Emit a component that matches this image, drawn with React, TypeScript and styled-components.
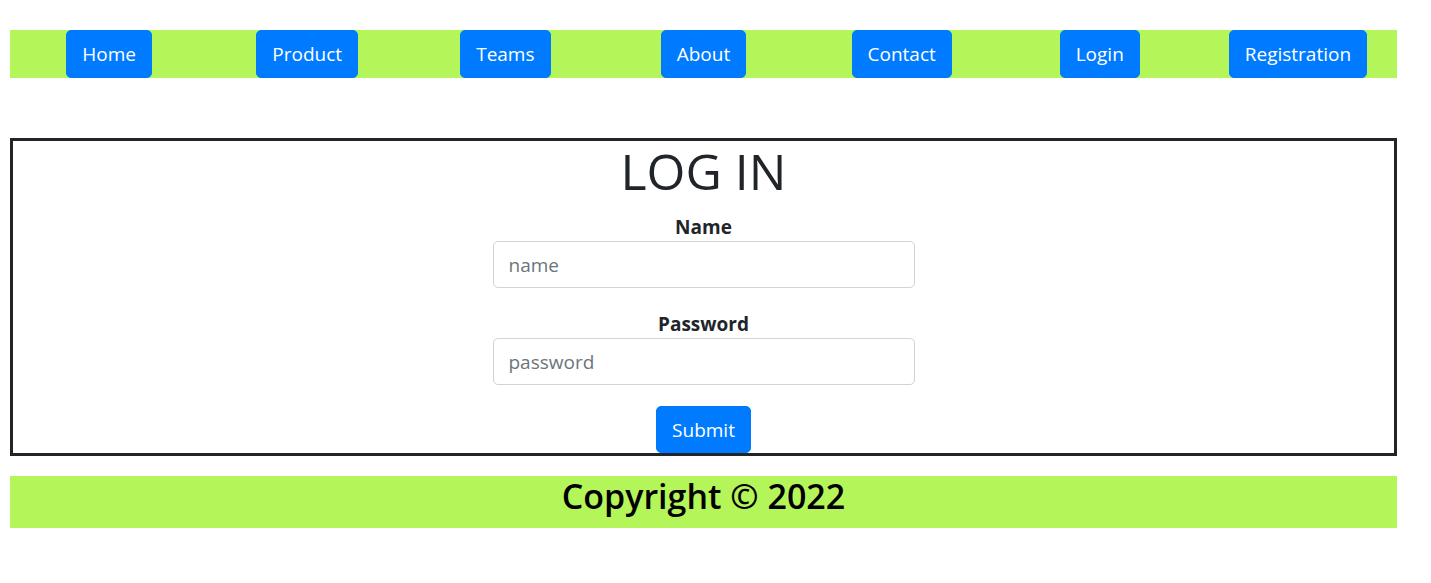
import React from "react";
import styled, { createGlobalStyle } from "styled-components";

const GlobalStyle = createGlobalStyle`
  html, body {
    margin: 0;
    padding: 0;
    background: #ffffff;
  }
  body {
    font-family: "Open Sans", "Noto Sans", Arial, sans-serif;
    color: #212529;
  }
  * { box-sizing: border-box; }
`;

const GREEN = "#b4f659";
const BLUE = "#007bff";

const Page = styled.div`
  width: 1387px;
  margin-left: 10px;
  padding-top: 30px;
`;

const Nav = styled.nav`
  display: grid;
  grid-template-columns: repeat(7, 1fr);
  justify-items: center;
  align-items: stretch;
  height: 48px;
  background: ${GREEN};
`;

const Button = styled.button<{ $h?: number }>`
  height: ${(p) => p.$h ?? 48}px;
  padding: 1px 15px 0;
  border: 1px solid ${BLUE};
  border-radius: 5px;
  background: ${BLUE};
  color: #ffffff;
  font-family: inherit;
  font-size: 19px;
  line-height: 1;
  cursor: pointer;
`;

const Card = styled.main`
  margin-top: 60px;
  border: 3px solid #212529;
  display: flex;
  flex-direction: column;
  align-items: center;
`;

const Title = styled.h1`
  margin: 0;
  font-size: 50px;
  line-height: 60px;
  font-weight: 400;
  color: #212529;
`;

const Label = styled.label<{ $top: number }>`
  display: block;
  margin-top: ${(p) => p.$top}px;
  font-size: 19px;
  line-height: 27px;
  font-weight: 700;
  color: #212529;
  text-align: center;
`;

const Input = styled.input`
  width: 422px;
  height: 47px;
  padding: 0 15px;
  border: 1px solid #ced4da;
  border-radius: 5px;
  font-family: inherit;
  font-size: 19px;
  color: #495057;
  background: #fff;
  &::placeholder {
    color: #6c757d;
  }
`;

const SubmitRow = styled.div`
  margin-top: 21px;
`;

const Footer = styled.footer`
  margin-top: 20px;
  height: 52px;
  padding-bottom: 11px;
  background: ${GREEN};
  text-align: center;
  font-size: 34px;
  line-height: 41px;
  font-weight: 600;
  color: #000;
`;

const links = ["Home", "Product", "Teams", "About", "Contact", "Login", "Registration"];

export default function App() {
  return (
    <>
      <GlobalStyle />
      <Page>
        <Nav>
          {links.map((l) => (
            <Button key={l}>{l}</Button>
          ))}
        </Nav>
        <Card>
          <Title>LOG IN</Title>
          <Label $top={13} htmlFor="name">Name</Label>
          <Input id="name" placeholder="name" />
          <Label $top={23} htmlFor="password">Password</Label>
          <Input id="password" type="password" placeholder="password" />
          <SubmitRow>
            <Button $h={47}>Submit</Button>
          </SubmitRow>
        </Card>
        <Footer>Copyright © 2022</Footer>
      </Page>
    </>
  );
}
